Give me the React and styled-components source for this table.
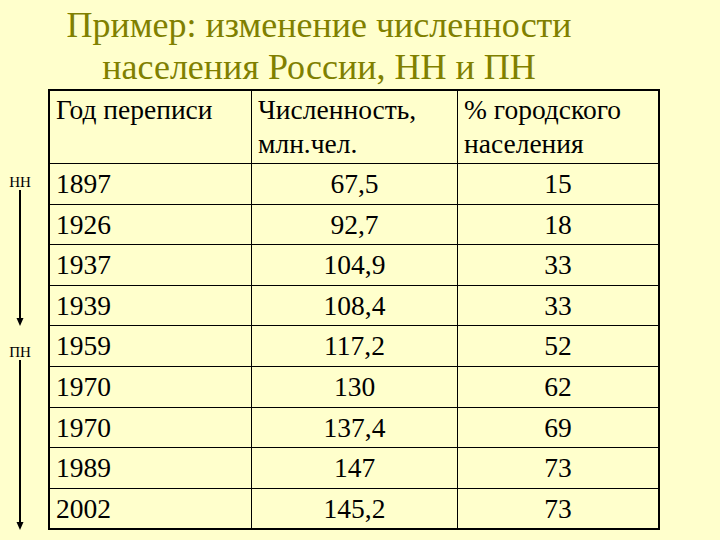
import React from "react";
import styled, { createGlobalStyle } from "styled-components";

const rows = [
  ["1897", "67,5", "15"],
  ["1926", "92,7", "18"],
  ["1937", "104,9", "33"],
  ["1939", "108,4", "33"],
  ["1959", "117,2", "52"],
  ["1970", "130", "62"],
  ["1970", "137,4", "69"],
  ["1989", "147", "73"],
  ["2002", "145,2", "73"],
];

const Arrow = ({ height }) => (
  <svg width="12" height={height} viewBox={`0 0 12 ${height}`}>
    <line x1="6" y1="0" x2="6" y2={height - 6} stroke="#000" strokeWidth="2" />
    <polygon points={`2.5,${height - 8} 9.5,${height - 8} 6,${height}`} fill="#000" />
  </svg>
);

export default function App() {
  return (
    <>
      <GlobalStyle />
      <Slide>
        <Title>
          Пример: изменение численности
          <br />
          населения России, НН и ПН
        </Title>
        <Body>
          <Side>
            <Mark>НН</Mark>
            <Arrow height={136} />
            <Mark $gap={19}>ПН</Mark>
            <Arrow height={170} />
          </Side>
          <Grid>
            <HeadCell>Год переписи</HeadCell>
            <HeadCell>
              Численность,
              <br />
              млн.чел.
            </HeadCell>
            <HeadCell>
              % городского
              <br />
              населения
            </HeadCell>
            {rows.map((r, i) => (
              <React.Fragment key={i}>
                <Cell>{r[0]}</Cell>
                <Cell $center>{r[1]}</Cell>
                <Cell $center>{r[2]}</Cell>
              </React.Fragment>
            ))}
          </Grid>
        </Body>
      </Slide>
    </>
  );
}

const GlobalStyle = createGlobalStyle`
  html, body {
    margin: 0;
    padding: 0;
    background: #ffffcc;
    font-family: "Liberation Serif", serif;
  }
`;

const Slide = styled.div`
  width: 720px;
  height: 540px;
  background: #ffffcc;
  font-family: "Liberation Serif", serif;
  color: #000;
  overflow: hidden;
`;

const Title = styled.h1`
  margin: 0;
  padding: 4px 82px 0 0;
  height: 85px;
  font-family: "Liberation Serif", serif;
  font-size: 36px;
  font-weight: normal;
  line-height: 42px;
  color: #808000;
  text-align: center;
`;

const Body = styled.div`
  display: flex;
`;

const Side = styled.div`
  width: 40px;
  margin-right: 8px;
  padding-top: 86px;
  display: flex;
  flex-direction: column;
  align-items: center;
`;

const Mark = styled.div`
  margin-top: ${(p) => p.$gap || 0}px;
  font-family: "Liberation Serif", serif;
  font-size: 15px;
  line-height: 15px;
`;

const Grid = styled.div`
  display: grid;
  grid-template-columns: 201px 205px 200px;
  grid-template-rows: 72px repeat(9, 39.6px);
  gap: 1px;
  padding: 2px;
  background: #000;
`;

const HeadCell = styled.div`
  background: #ffffcc;
  font-family: "Liberation Serif", serif;
  font-size: 27.5px;
  line-height: 34px;
  padding: 2px 6px 0;
`;

const Cell = styled.div`
  background: #ffffcc;
  font-family: "Liberation Serif", serif;
  font-size: 27.5px;
  line-height: 39.6px;
  padding: 0 6px;
  text-align: ${(p) => (p.$center ? "center" : "left")};
`;
